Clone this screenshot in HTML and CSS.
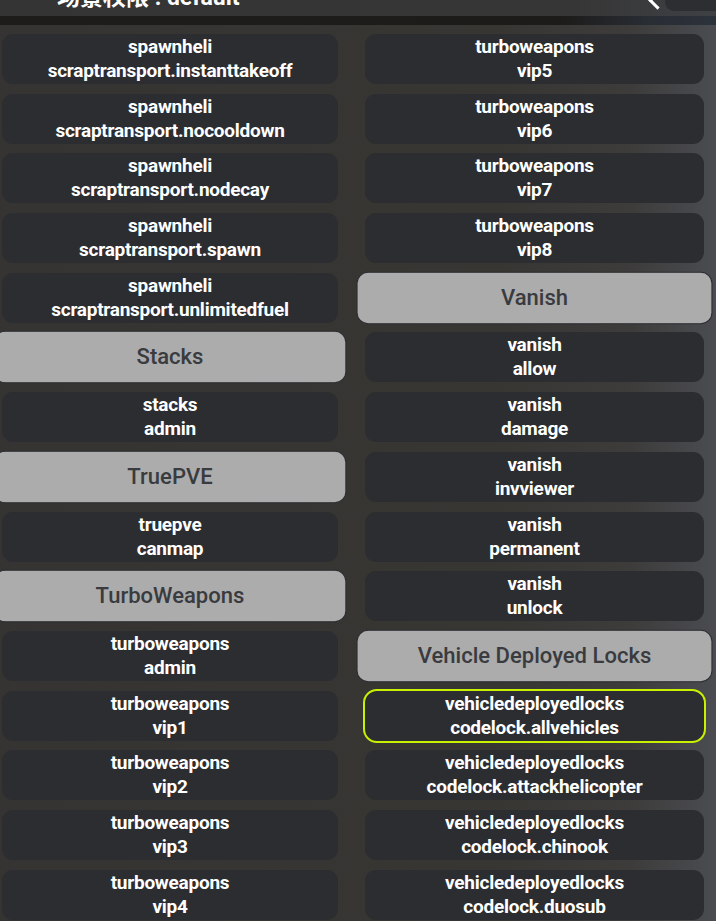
FILE: index.html
```html
<!DOCTYPE html>
<html lang="zh-CN">
<head>
    <meta charset="UTF-8">
    <meta name="viewport" content="width=device-width, initial-scale=1.0">
    <title>场景权限</title>
    <link rel="stylesheet" href="styles.css">
</head>
<body>

<header class="topbar">
    <div class="title">场景权限 : default</div>
    <div class="back"></div>
    <div class="tab"></div>
</header>
<div class="divider"></div>

<main class="perm-grid">
    <div class="col">
        <div class="perm"><span>spawnheli</span><span>scraptransport.instanttakeoff</span></div>
        <div class="perm"><span>spawnheli</span><span>scraptransport.nocooldown</span></div>
        <div class="perm"><span>spawnheli</span><span>scraptransport.nodecay</span></div>
        <div class="perm"><span>spawnheli</span><span>scraptransport.spawn</span></div>
        <div class="perm"><span>spawnheli</span><span>scraptransport.unlimitedfuel</span></div>
        <div class="group">Stacks</div>
        <div class="perm"><span>stacks</span><span>admin</span></div>
        <div class="group">TruePVE</div>
        <div class="perm"><span>truepve</span><span>canmap</span></div>
        <div class="group">TurboWeapons</div>
        <div class="perm"><span>turboweapons</span><span>admin</span></div>
        <div class="perm"><span>turboweapons</span><span>vip1</span></div>
        <div class="perm"><span>turboweapons</span><span>vip2</span></div>
        <div class="perm"><span>turboweapons</span><span>vip3</span></div>
        <div class="perm"><span>turboweapons</span><span>vip4</span></div>
    </div>
    <div class="col">
        <div class="perm"><span>turboweapons</span><span>vip5</span></div>
        <div class="perm"><span>turboweapons</span><span>vip6</span></div>
        <div class="perm"><span>turboweapons</span><span>vip7</span></div>
        <div class="perm"><span>turboweapons</span><span>vip8</span></div>
        <div class="group">Vanish</div>
        <div class="perm"><span>vanish</span><span>allow</span></div>
        <div class="perm"><span>vanish</span><span>damage</span></div>
        <div class="perm"><span>vanish</span><span>invviewer</span></div>
        <div class="perm"><span>vanish</span><span>permanent</span></div>
        <div class="perm"><span>vanish</span><span>unlock</span></div>
        <div class="group">Vehicle Deployed Locks</div>
        <div class="perm selected"><span>vehicledeployedlocks</span><span>codelock.allvehicles</span></div>
        <div class="perm"><span>vehicledeployedlocks</span><span>codelock.attackhelicopter</span></div>
        <div class="perm"><span>vehicledeployedlocks</span><span>codelock.chinook</span></div>
        <div class="perm"><span>vehicledeployedlocks</span><span>codelock.duosub</span></div>
    </div>
</main>

</body>
</html>
```

FILE: styles.css
```css
html, body {
    margin: 0;
    height: 100%;
    overflow: hidden;
}

body {
    font-family: Roboto, "Noto Sans CJK SC", sans-serif;
    background: linear-gradient(90deg, #363432 0%, #383633 70%, #3d3c3b 88%, #4a4c51 100%);
    color: #fff;
}

.topbar {
    position: relative;
    height: 16px;
    overflow: hidden;
    background: linear-gradient(90deg, #343434 0%, #363636 80%, #3e4044 100%);
}

.title {
    margin: -14px 0 0 57px;
    font-size: 23px;
    font-weight: 700;
    line-height: 24px;
    color: #fff;
}

.back {
    position: absolute;
    top: -6px;
    left: 651px;
    width: 10px;
    height: 10px;
    border-left: 3px solid #fff;
    border-bottom: 3px solid #fff;
    transform: rotate(45deg);
}

.tab {
    position: absolute;
    top: -10px;
    left: 665px;
    width: 70px;
    height: 21px;
    background: #2c2e32;
    border-radius: 9px;
}

.divider {
    height: 9px;
    background: linear-gradient(90deg, #1d1c1a 0%, #1c1b19 78%, #282c33 90%, #2c323b 100%);
}

.perm-grid {
    display: grid;
    grid-template-columns: 336px 339px;
    column-gap: 27px;
    padding: 9px 0 0 2px;
}

.col {
    display: flex;
    flex-direction: column;
    gap: 9.7px;
}

.perm {
    height: 50px;
    box-sizing: border-box;
    display: flex;
    flex-direction: column;
    align-items: center;
    justify-content: center;
    background-color: #2b2d31;
    border-radius: 11px;
    font-size: 19px;
    font-weight: 700;
    line-height: 24px;
    letter-spacing: -0.25px;
    color: #fff;
}

.perm.selected {
    outline: 2px solid #c8f000;
    outline-offset: 0;
    border-radius: 12px;
}

.group {
    height: 50px;
    box-sizing: border-box;
    display: flex;
    align-items: center;
    justify-content: center;
    background-color: #acacac;
    border: 1px solid #2b2d31;
    border-radius: 11px;
    transform: scale(1.05);
    font-size: 21px;
    font-weight: 500;
    color: #393b3f;
}
```
